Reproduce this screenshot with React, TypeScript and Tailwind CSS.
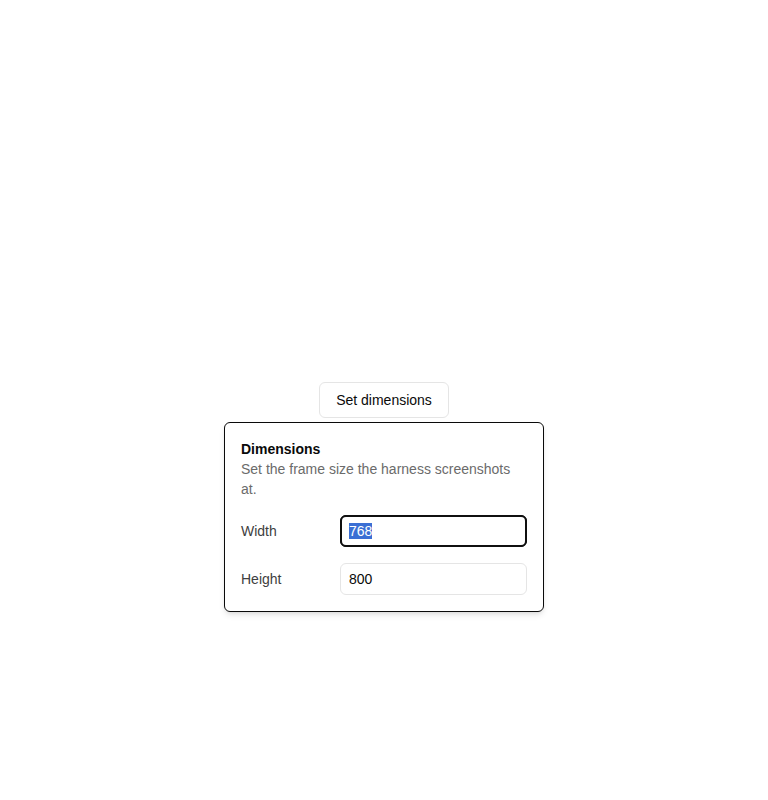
import { useEffect, useRef, useState } from 'react';

export default function App() {
  const widthRef = useRef<HTMLInputElement>(null);
  const [width, setWidth] = useState('768');
  const [height, setHeight] = useState('800');

  useEffect(() => {
    widthRef.current?.focus();
    widthRef.current?.select();
  }, []);

  return (
    <div
      className="h-[800px] w-full bg-white flex items-center justify-center text-[#0a0a0a]"
      style={{ fontFamily: '"Liberation Sans", Arial, sans-serif' }}
    >
      <div className="relative">
        <button className="h-9 px-4 rounded-md border border-[#e5e5e5] bg-white text-sm text-[#0a0a0a]">
          Set dimensions
        </button>

        {/* Popover */}
        <div className="absolute top-10 left-1/2 -translate-x-1/2 w-80 rounded-md border border-[#0a0a0a] bg-white p-4 shadow-md">
          <div className="text-sm leading-5">
            <div className="font-bold">Dimensions</div>
            <p className="text-[#6b6b6b]">Set the frame size the harness screenshots at.</p>
          </div>
          <div className="mt-4 grid grid-cols-[83px_1fr] items-center gap-4">
            <label className="text-sm text-[#404040]">Width</label>
            <input
              ref={widthRef}
              value={width}
              onChange={(e) => setWidth(e.target.value)}
              className="h-8 w-full rounded-md border border-[#e5e5e5] px-2 text-sm text-[#0a0a0a] selection:bg-[#3b6fd4] selection:text-white focus:outline-2 focus:outline-offset-[-2px] focus:outline-[#101010] focus:border-[#101010]"
            />
            <label className="text-sm text-[#404040]">Height</label>
            <input
              value={height}
              onChange={(e) => setHeight(e.target.value)}
              className="h-8 w-full rounded-md border border-[#e5e5e5] px-2 text-sm text-[#0a0a0a] selection:bg-[#3b6fd4] selection:text-white focus:outline-2 focus:outline-offset-[-2px] focus:outline-[#101010] focus:border-[#101010]"
            />
          </div>
        </div>
      </div>
    </div>
  );
}
